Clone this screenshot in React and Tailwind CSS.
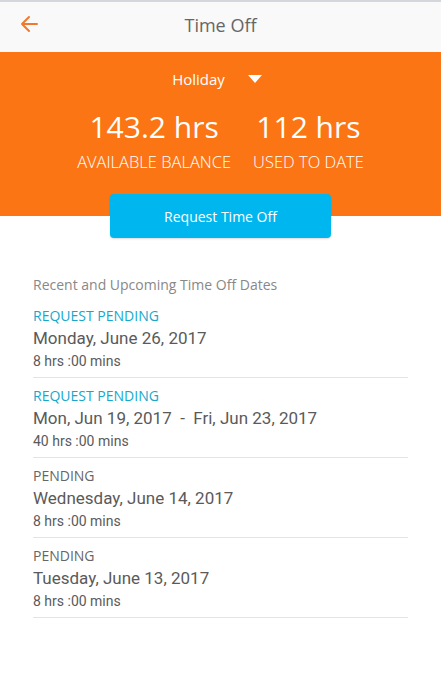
import React from 'react';

const items = [
  { status: 'REQUEST PENDING', request: true, date: 'Monday, June 26, 2017', hours: '8 hrs :00 mins' },
  { status: 'REQUEST PENDING', request: true, date: 'Mon, Jun 19, 2017  -  Fri, Jun 23, 2017', hours: '40 hrs :00 mins' },
  { status: 'PENDING', request: false, date: 'Wednesday, June 14, 2017', hours: '8 hrs :00 mins' },
  { status: 'PENDING', request: false, date: 'Tuesday, June 13, 2017', hours: '8 hrs :00 mins' },
];

export default function App() {
  return (
    <div className="w-[441px] h-[686px] bg-white overflow-hidden font-['Open_Sans',sans-serif]">
      {/* top bar */}
      <div className="h-[52px] bg-[#f9f9f9] border-t-2 border-[#d3d7db] flex items-center pb-[5px] relative">
        <svg className="absolute left-[19px] top-[12px]" width="20" height="20" viewBox="0 0 20 20" fill="none">
          <path d="M18 10H3M10 3L3 10L10 17" stroke="#f07a2c" strokeWidth="2" strokeLinecap="round" strokeLinejoin="round" />
        </svg>
        <div className="w-full text-center text-[18px] text-[#666] leading-[24px]">Time Off</div>
      </div>

      {/* balance */}
      <div className="bg-[#fb7515] text-white pt-[17px] pb-[43px]">
        <div className="flex justify-center items-center gap-[23px] pr-[7px]">
          <span className="text-[15px] leading-[20px]">Holiday</span>
          <svg width="14" height="8" viewBox="0 0 14 8">
            <path d="M0 0H14L7 8Z" fill="white" />
          </svg>
        </div>
        <div className="flex justify-center gap-[22px] mt-[20px]">
          <div className="flex flex-col items-center">
            <div className="text-[30px] leading-[36px]">143.2 hrs</div>
            <div className="text-[16.5px] leading-[22px] font-light mt-[6px]">AVAILABLE BALANCE</div>
          </div>
          <div className="flex flex-col items-center">
            <div className="text-[30px] leading-[36px]">112 hrs</div>
            <div className="text-[16.5px] leading-[22px] font-light mt-[6px]">USED TO DATE</div>
          </div>
        </div>
      </div>
      <div className="flex justify-center -mt-[22px]">
        <button className="w-[221px] h-[44px] bg-[#00b6ee] rounded-[4px] text-white text-[14px] shadow-[0_1px_2px_rgba(0,0,0,0.15)]">
          Request Time Off
        </button>
      </div>

      {/* list */}
      <div className="mx-[33px] mt-[38px]">
        <div className="text-[14px] leading-[18px] text-[#888] mb-[4px]">Recent and Upcoming Time Off Dates</div>
        {items.map((it, i) => (
          <div key={i} className="pt-[9px] pb-[7px] border-b border-[#e3e3e3]">
            <div className={`text-[14px] leading-[18px] ${it.request ? 'text-[#14a8cc]' : 'text-[#666]'}`}>{it.status}</div>
            <div className="font-['Roboto',sans-serif] text-[17px] leading-[24px] text-[#5a5a5a] whitespace-pre mt-[1px]">{it.date}</div>
            <div className="font-['Roboto',sans-serif] text-[14px] leading-[18px] text-[#5a5a5a] mt-[2px]">{it.hours}</div>
          </div>
        ))}
      </div>
    </div>
  );
}
